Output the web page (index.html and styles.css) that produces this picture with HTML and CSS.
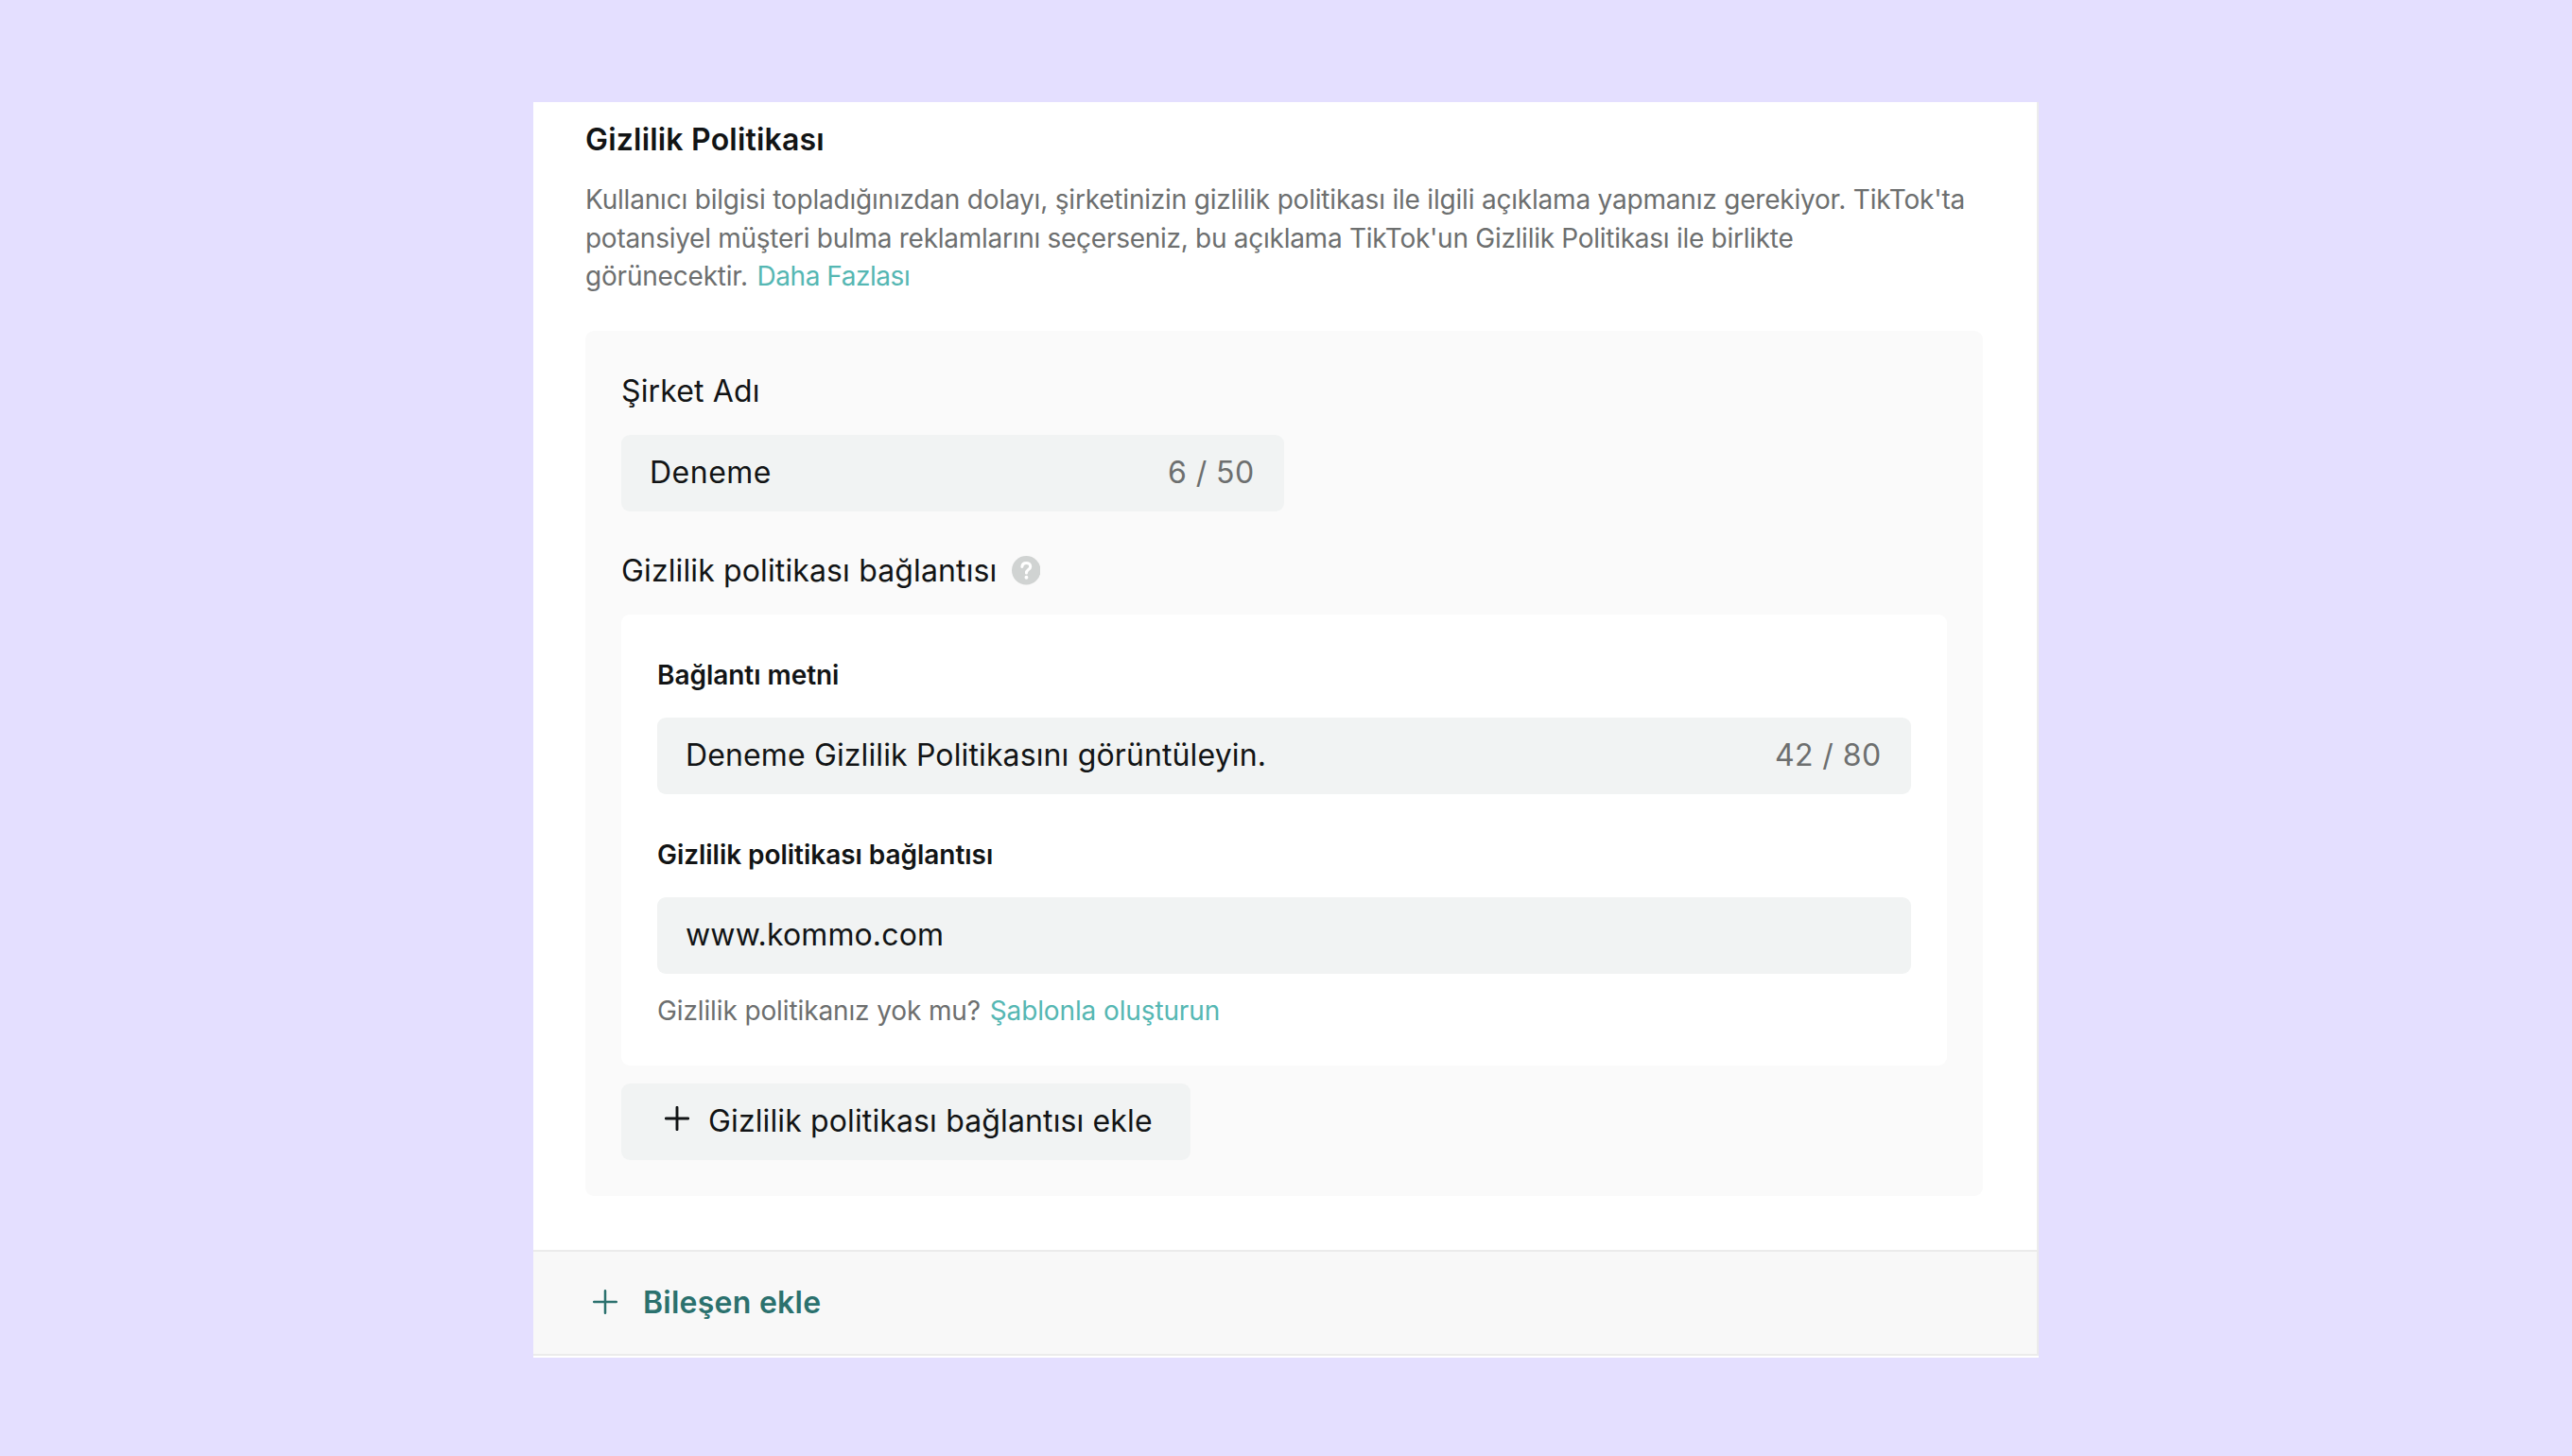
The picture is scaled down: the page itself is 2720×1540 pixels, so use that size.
FILE: index.html
```html
<!DOCTYPE html>
<html lang="tr">
<head>
  <meta charset="UTF-8">
  <title>Gizlilik Politikası</title>
  <meta name="viewport" content="width=device-width, initial-scale=1.0">
  <link rel="stylesheet" href="styles.css">
</head>
<body>
  <main class="panel">
    <section class="content">
      <h1 class="title">Gizlilik Politikası</h1>
      <p class="description">
        Kullanıcı bilgisi topladığınızdan dolayı, şirketinizin gizlilik politikası ile ilgili açıklama yapmanız gerekiyor. TikTok'ta<br>
        <span class="tight">potansiyel müşteri bulma reklamlarını seçerseniz, bu açıklama TikTok'un Gizlilik Politikası ile birlikte</span><br>
        görünecektir. <a class="link">Daha Fazlası</a>
      </p>
      <div class="box">
        <div class="label">Şirket Adı</div>
        <div class="field field-company">
          <span class="company-name">Deneme</span>
          <span class="counter">6 / 50</span>
        </div>
        <div class="label label-link">
          Gizlilik politikası bağlantısı
          <svg class="help" viewBox="0 0 30 30">
            <circle cx="15" cy="15" r="15" fill="#d0d3d2"/>
            <path d="M10.7 11.3C10.9 8.8 12.7 7.3 15.1 7.3C17.6 7.3 19.4 8.8 19.4 11C19.4 14.2 15.2 14.2 15.2 17.6" fill="none" stroke="#fff" stroke-width="3" stroke-linecap="round"/>
            <circle cx="15.2" cy="22.4" r="1.9" fill="#fff"/>
          </svg>
        </div>
        <div class="card">
          <div class="sublabel">Bağlantı metni</div>
          <div class="field">
            <span>Deneme Gizlilik Politikasını görüntüleyin.</span>
            <span class="counter">42 / 80</span>
          </div>
          <div class="sublabel sublabel-next">Gizlilik politikası bağlantısı</div>
          <div class="field">
            <span>www.kommo.com</span>
          </div>
          <p class="hint">Gizlilik politikanız yok mu? <a class="link">Şablonla oluşturun</a></p>
        </div>
        <button class="add-link">
          <svg class="plus" viewBox="0 0 26 26">
            <path d="M13 1.3V24.7M1.3 13H24.7" stroke="#121415" stroke-width="2.9" stroke-linecap="round"/>
          </svg>
          Gizlilik politikası bağlantısı ekle
        </button>
      </div>
    </section>
    <footer class="footer">
      <svg class="plus" viewBox="0 0 26 26">
        <path d="M13 1.2V24.8M1.2 13H24.8" stroke="#2b716e" stroke-width="2.5" stroke-linecap="round"/>
      </svg>
      Bileşen ekle
    </footer>
  </main>
</body>
</html>
```
FILE: styles.css
```css
* { margin: 0; padding: 0; box-sizing: border-box; }
body {
  background: #e4dfff;
  font-family: Inter, "Liberation Sans", sans-serif;
  font-size: 32px;
  letter-spacing: 0.13px;
  color: #121415;
  padding-top: 108px;
}
.panel {
  width: 1592px;
  height: 1328px;
  margin: 0 auto;
  background: #fff;
}
.content {
  height: 1214px;
  padding: 16px 57.5px 0 55px;
  border-right: 2px solid #ececec;
}
.title {
  font-size: 32px;
  font-weight: 600;
  line-height: 48px;
  letter-spacing: 0.2px;
}
.description {
  margin-top: 19px;
  font-size: 28px;
  line-height: 40.5px;
  letter-spacing: -0.2px;
  color: #6d6f6f;
  white-space: nowrap;
}
.tight {
  letter-spacing: -0.27px;
}
.link {
  color: #55b7b3;
}
.description .link {
  margin-left: 2px;
  letter-spacing: -0.45px;
}
.box {
  margin-top: 37.5px;
  padding: 39.5px 38px 38px;
  background: #fafafa;
  border-radius: 9px;
}
.label {
  line-height: 48px;
  margin-bottom: 22px;
}
.label-link {
  display: flex;
  align-items: center;
  gap: 15.5px;
  margin-top: 39px;
}
.help {
  width: 30.5px;
  height: 30.5px;
}
.field {
  display: flex;
  align-items: center;
  justify-content: space-between;
  height: 81px;
  padding: 0 31px 2px 30px;
  background: #f1f3f3;
  border-radius: 9px;
}
.field-company {
  width: 700.5px;
}
.company-name {
  letter-spacing: 0.5px;
}
.counter {
  color: #6d6f6f;
  letter-spacing: 0.4px;
}
.card {
  padding: 43px 38px 37px;
  background: #fff;
  border-radius: 9px;
}
.sublabel {
  font-size: 28px;
  font-weight: 600;
  line-height: 42px;
  letter-spacing: -0.04px;
  margin-bottom: 24.5px;
}
.sublabel-next {
  margin-top: 42.5px;
}
.hint {
  margin-top: 17.5px;
  font-size: 28px;
  line-height: 42px;
  letter-spacing: -0.12px;
  color: #6d6f6f;
}
.hint .link {
  margin-left: 2px;
}
.plus {
  width: 26px;
  height: 26px;
}
.add-link {
  display: flex;
  align-items: center;
  gap: 20px;
  width: 602px;
  height: 81px;
  margin-top: 19px;
  padding: 0 0 1px 46px;
  font: inherit;
  letter-spacing: inherit;
  color: inherit;
  background: #f1f3f3;
  border: none;
  border-radius: 9px;
}
.add-link .plus {
  margin-bottom: 6px;
}
.footer {
  display: flex;
  align-items: center;
  gap: 27px;
  height: 112px;
  padding: 0 0 2px 63px;
  background: #f8f8f8;
  border: 2px solid #ebebeb;
  border-left: none;
  font-weight: 600;
  letter-spacing: 0.25px;
  color: #2b716e;
}
```
